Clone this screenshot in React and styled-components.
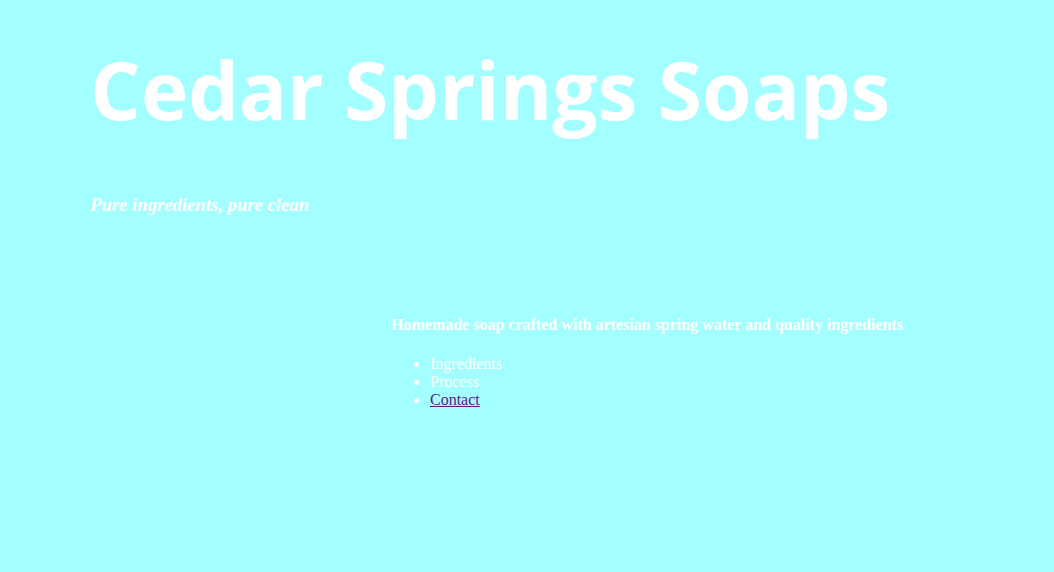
import React from 'react'
import styled, { createGlobalStyle } from 'styled-components'

const GlobalStyle = createGlobalStyle`
    html, body {
        margin: 0;
        background: #a3ffff;
    }
    body {
        font-family: "Liberation Serif", "Times New Roman", serif;
        color: #ffffff;
    }
`

const Page = styled.div`
    min-height: 572px;
    padding: 34px 0 0 90px;
    box-sizing: border-box;
`

const Header = styled.header`
    display: flex;
    flex-direction: column;
`

const Title = styled.h1`
    margin: 0;
    font-family: "Open Sans", sans-serif;
    font-weight: 700;
    font-size: 80px;
    line-height: normal;
    color: #ffffff;
`

const Tagline = styled.h2`
    margin: 51px 0 0;
    font-size: 18.7px;
    font-style: italic;
    font-weight: bold;
`

const Main = styled.main`
    display: grid;
    grid-template-columns: 301px auto;
    margin-top: 100px;
`

const Intro = styled.div`
    grid-column: 2;
`

const Lead = styled.h3`
    margin: 0;
    font-size: 16px;
    font-weight: bold;
`

const Nav = styled.ul`
    margin: 21px 0 0;
    padding-left: 39px;
    font-size: 16px;
    line-height: 18px;
`

const Item = styled.li`
    color: #ffffff;
`

const NavLink = styled.a`
    color: #551a8b;
`

export default function App() {
    return (
        <>
            <GlobalStyle />
            <Page>
                <Header>
                    <Title>Cedar Springs Soaps</Title>
                    <Tagline>Pure ingredients, pure clean</Tagline>
                </Header>
                <Main>
                    <Intro>
                        <Lead>Homemade soap crafted with artesian spring water and quality ingredients</Lead>
                        <Nav>
                            <Item>Ingredients</Item>
                            <Item>Process</Item>
                            <Item><NavLink href="#contact">Contact</NavLink></Item>
                        </Nav>
                    </Intro>
                </Main>
            </Page>
        </>
    )
}
